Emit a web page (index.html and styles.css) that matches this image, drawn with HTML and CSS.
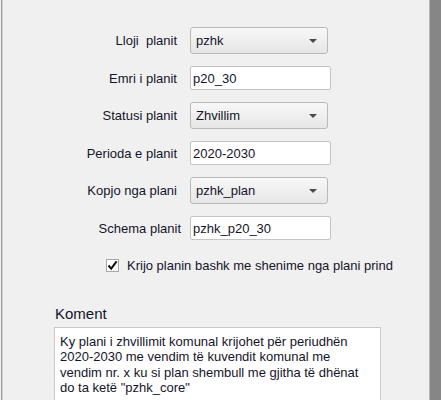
FILE: index.html
```html
<!DOCTYPE html>
<html lang="sq">
<head>
<meta charset="utf-8">
<title>Plan</title>
<link rel="stylesheet" href="styles.css">
</head>
<body>
<div class="window">
  <div class="edge-left"></div>
  <main class="content">
    <div class="form">
      <label class="lbl">Lloji&nbsp; planit</label>
      <div class="combo"><span>pzhk</span><i class="arrow"></i></div>

      <label class="lbl">Emri i planit</label>
      <div class="input">p20_30</div>

      <label class="lbl">Statusi planit</label>
      <div class="combo"><span>Zhvillim</span><i class="arrow"></i></div>

      <label class="lbl">Perioda e planit</label>
      <div class="input">2020-2030</div>

      <label class="lbl">Kopjo nga plani</label>
      <div class="combo"><span>pzhk_plan</span><i class="arrow"></i></div>

      <label class="lbl lbl-schema">Schema planit</label>
      <div class="input">pzhk_p20_30</div>
    </div>

    <div class="check-row">
      <span class="checkbox">
        <svg width="11" height="11" viewBox="0 0 11 11"><path d="M1.5 5.5 L4.2 8.6 L9.6 1.4" fill="none" stroke="#111" stroke-width="2"/></svg>
      </span>
      <span class="check-text">Krijo planin bashk me shenime nga plani prind</span>
    </div>

    <div class="comment-title">Koment</div>
    <div class="textarea">Ky plani i zhvillimit komunal krijohet për periudhën
2020-2030 me vendim të kuvendit komunal me
vendim nr. x ku si plan shembull me gjitha të dhënat
do ta ketë "pzhk_core"</div>
  </main>
  <div class="edge-right"></div>
</div>
</body>
</html>
```

FILE: styles.css
```css
html, body {
  margin: 0;
  padding: 0;
  background: #f0f0f0;
  height: 100%;
  overflow: hidden;
}

body {
  font-family: "Liberation Sans", Arial, sans-serif;
  font-size: 13px;
  color: #14142a;
}

.window {
  display: flex;
  height: 400px;
}

.edge-left {
  width: 1px;
  margin-left: 1px;
  background: #9c9c9c;
  border-right: 1px solid #d2d2d2;
}

.content {
  flex: 1;
  padding-top: 27px;
}

.edge-right {
  width: 11px;
  background: #868686;
  border-left: 1px solid #b4b4b4;
}

.form {
  display: grid;
  grid-template-columns: 174px 141px;
  column-gap: 13px;
  row-gap: 12px;
  align-items: center;
}

.lbl {
  text-align: right;
  white-space: nowrap;
}

.lbl-schema {
  margin-right: -4px;
}

.combo {
  width: 136px;
  height: 25px;
  border: 1px solid #b9b9b9;
  border-radius: 3px;
  background: linear-gradient(#f8f8f8, #e6e6e6);
  display: flex;
  align-items: center;
  justify-content: space-between;
  padding: 0 10px 0 5px;
  box-sizing: border-box;
  width: 138px;
  height: 27px;
}

.arrow {
  width: 0;
  height: 0;
  border-left: 4px solid transparent;
  border-right: 4px solid transparent;
  border-top: 4px solid #4a4a4a;
}

.input {
  height: 24px;
  box-sizing: border-box;
  border: 1px solid #c3c3c3;
  border-radius: 2px;
  background: #fff;
  padding: 0 2px;
  display: flex;
  align-items: center;
}

.check-row {
  display: flex;
  align-items: center;
  margin: 17px 0 0 103px;
  height: 16px;
}

.checkbox {
  width: 13px;
  height: 13px;
  box-sizing: border-box;
  border: 1px solid #a8a8a8;
  background: #fcfcfc;
  display: flex;
  align-items: center;
  justify-content: center;
  margin-right: 8px;
}

.comment-title {
  margin: 33px 0 0 52px;
  font-size: 15px;
  line-height: 16px;
}

.textarea {
  margin: 5px 0 0 51px;
  width: 327px;
  height: 90px;
  box-sizing: border-box;
  border: 1px solid #c8c8c8;
  background: #fff;
  padding: 6px 5px;
  line-height: 15.4px;
  white-space: pre-line;
}
```
